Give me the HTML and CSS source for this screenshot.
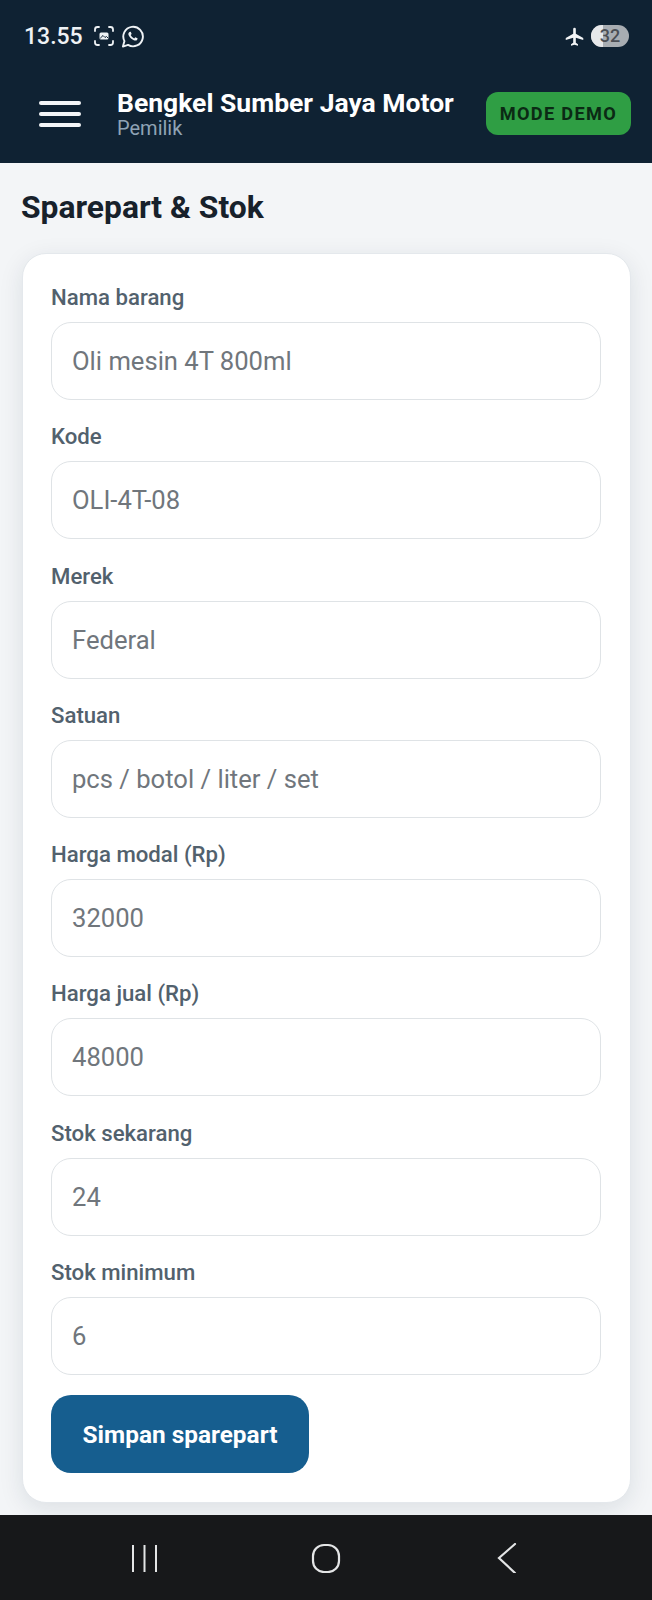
FILE: index.html
```html
<!DOCTYPE html>
<html lang="id">
<head>
  <meta charset="UTF-8">
  <title>Sparepart &amp; Stok</title>
  <meta name="viewport" content="width=device-width, initial-scale=1.0">
  <link rel="stylesheet" href="styles.css">
</head>
<body>
  <div class="top-area">
    <!-- Android status bar -->
    <div class="status-bar">
      <div class="status-left">
        <span class="status-time">13.55</span>
        <svg class="status-icon" width="24" height="24" viewBox="0 0 24 24" fill="none" stroke="#eef2f5" stroke-width="1.800" stroke-linecap="round">
          <path d="M3 7V5.500Q3 3 5.500 3H7M17 3H18.500Q21 3 21 5.500V7M21 17V18.500Q21 21 18.500 21H17M7 21H5.500Q3 21 3 18.500V17"/>
          <rect x="7.500" y="8.500" width="9" height="7" rx="1.500" fill="#eef2f5" stroke="none"/>
          <path d="M8.500 14L11 11.500L13 13.500L14.500 12.500L16 14" stroke="#0f2233" stroke-width="1"/>
        </svg>
        <svg class="status-icon whatsapp-icon" width="23" height="23" viewBox="0 0 24 24" fill="none" stroke="#eef2f5" stroke-width="2" stroke-linejoin="round">
          <path d="M2 22.500L3.600 16.800A10.200 10.200 0 1 1 7.400 20.800Z"/>
          <path d="M8.800 7.200C7.800 8 7.300 9.200 8 10.800C9 13 11 15 13.400 16C15 16.600 16.400 16.200 17 15C17.300 14.400 17.300 14 17.200 13.800L14.900 12.700L13.800 14C12.200 13.400 10.800 12 10.100 10.500L11.100 9.300L10.200 7.100Z" fill="#eef2f5" stroke="none"/>
        </svg>
      </div>
      <div class="status-right">
        <svg width="21" height="21" viewBox="0 0 24 24" fill="#f2f4f6">
          <path d="M22 16v-2.200l-8.500-5V3.500a1.500 1.500 0 0 0-3 0v5.300l-8.500 5V16l8.500-2.500V19l-2.500 1.800V22.500l4-1.100 4 1.100v-1.700L13.500 19v-5.500z"/>
        </svg>
        <div class="battery"><span class="battery-fill"></span><span class="battery-level">32</span></div>
      </div>
    </div>

    <!-- App header -->
    <header class="app-header">
      <button class="menu-btn" aria-label="Menu"><span></span><span></span><span></span></button>
      <div class="app-title">
        <div class="app-name">Bengkel Sumber Jaya Motor</div>
        <div class="app-role">Pemilik</div>
      </div>
      <span class="demo-badge">MODE DEMO</span>
    </header>
  </div>

  <main class="content">
    <h1 class="page-title">Sparepart &amp; Stok</h1>
    <form class="card">
      <div class="field">
        <label class="field-label" for="nama">Nama barang</label>
        <input class="field-input" id="nama" placeholder="Oli mesin 4T 800ml">
      </div>
      <div class="field">
        <label class="field-label" for="kode">Kode</label>
        <input class="field-input" id="kode" placeholder="OLI-4T-08">
      </div>
      <div class="field">
        <label class="field-label" for="merek">Merek</label>
        <input class="field-input" id="merek" placeholder="Federal">
      </div>
      <div class="field">
        <label class="field-label" for="satuan">Satuan</label>
        <input class="field-input" id="satuan" placeholder="pcs / botol / liter / set">
      </div>
      <div class="field">
        <label class="field-label" for="modal">Harga modal (Rp)</label>
        <input class="field-input" id="modal" placeholder="32000">
      </div>
      <div class="field">
        <label class="field-label" for="jual">Harga jual (Rp)</label>
        <input class="field-input" id="jual" placeholder="48000">
      </div>
      <div class="field">
        <label class="field-label" for="stok">Stok sekarang</label>
        <input class="field-input" id="stok" placeholder="24">
      </div>
      <div class="field">
        <label class="field-label" for="minimum">Stok minimum</label>
        <input class="field-input" id="minimum" placeholder="6">
      </div>
      <button class="save-btn" type="button">Simpan sparepart</button>
    </form>
  </main>

  <!-- Android navigation bar -->
  <nav class="nav-bar">
    <svg width="30" height="30" viewBox="0 0 30 30" fill="none" stroke="#e4e5e6" stroke-width="2">
      <path d="M3 2V29M14.500 2V29M26 2V29"/>
    </svg>
    <svg width="30" height="30" viewBox="0 0 30 30" fill="none" stroke="#e4e5e6" stroke-width="2.200">
      <rect x="2" y="2" width="26" height="27" rx="11"/>
    </svg>
    <svg width="30" height="30" viewBox="0 0 30 30" fill="none" stroke="#e4e5e6" stroke-width="2.200" stroke-linecap="round">
      <path d="M23 1L7 15L23 30"/>
    </svg>
  </nav>
</body>
</html>
```

FILE: styles.css
```css
html, body {
  margin: 0;
  height: 100%;
}
body {
  display: flex;
  flex-direction: column;
  height: 1600px;
  overflow: hidden;
  background: #f3f5f7;
  font-family: Roboto, "Liberation Sans", sans-serif;
}
.top-area {
  background: #0f2233;
  height: 163px;
  box-sizing: border-box;
}
.status-bar {
  display: flex;
  justify-content: space-between;
  align-items: center;
  height: 72px;
  padding: 0 23px 0 24px;
  color: #eef2f5;
}
.status-left {
  display: flex;
  align-items: center;
}
.status-time {
  font-size: 23px;
  font-weight: 500;
  margin-right: 9px;
}
.status-icon {
  display: block;
}
.whatsapp-icon {
  margin-left: 5px;
}
.status-right {
  display: flex;
  align-items: center;
  gap: 6px;
}
.battery {
  position: relative;
  width: 38px;
  height: 22px;
  border-radius: 11px;
  background: #a8adb2;
  overflow: hidden;
}
.battery-fill {
  position: absolute;
  left: 0;
  top: 0;
  bottom: 0;
  width: 12px;
  background: #e6e8ea;
}
.battery-level {
  position: absolute;
  left: 0;
  right: 0;
  top: 0;
  text-align: center;
  font-size: 18px;
  line-height: 22px;
  font-weight: 500;
  color: #4b4f55;
}
.app-header {
  display: flex;
  align-items: center;
  height: 83px;
  padding: 0 21px 0 39px;
}
.menu-btn {
  display: flex;
  flex-direction: column;
  gap: 7px;
  width: 42px;
  padding: 0;
  margin-right: 36px;
  border: none;
  background: transparent;
}
.menu-btn span {
  display: block;
  height: 4px;
  border-radius: 2px;
  background: #f4f6f8;
}
.app-title {
  flex: 1;
  padding-bottom: 1px;
}
.app-name {
  font-size: 26.500px;
  font-weight: 700;
  line-height: 30px;
  color: #fff;
}
.app-role {
  font-size: 20px;
  line-height: 21px;
  color: #8fa3b5;
}
.demo-badge {
  display: block;
  padding: 0 14px;
  height: 43px;
  line-height: 43px;
  border-radius: 12px;
  background: #2f9e44;
  color: #0b2a14;
  font-size: 18.200px;
  font-weight: 700;
  letter-spacing: 1.300px;
}
.content {
  flex: 1;
  padding: 0 21px 0 22px;
}
.page-title {
  margin: 26px 0 27px -1px;
  font-size: 31.800px;
  line-height: 37px;
  font-weight: 700;
  color: #17212b;
}
.card {
  box-sizing: border-box;
  height: 1250px;
  padding: 30px 29px 0 28px;
  background: #fff;
  border: 1px solid #e4e8ec;
  border-radius: 24px;
  box-shadow: 0 6px 24px rgba(20, 40, 60, 0.10);
}
.field {
  margin-bottom: 23.300px;
}
.field:nth-last-child(2) {
  margin-bottom: 20px;
}
.field-label {
  display: block;
  font-size: 22.200px;
  font-weight: 500;
  line-height: 26px;
  margin-bottom: 12px;
  color: #52616d;
}
.field-input {
  display: block;
  box-sizing: border-box;
  width: 100%;
  height: 78px;
  padding: 0 20px;
  border: 1px solid #dfe3e6;
  border-radius: 20px;
  background: #fff;
  font-family: inherit;
  font-size: 25.600px;
  outline: none;
}
.field-input::placeholder {
  color: #70767c;
  opacity: 1;
}
.save-btn {
  display: block;
  height: 78px;
  width: 258px;
  border: none;
  border-radius: 20px;
  background: #165e8f;
  color: #fff;
  font-family: inherit;
  font-size: 24.400px;
  font-weight: 700;
}
.nav-bar {
  display: flex;
  justify-content: center;
  align-items: center;
  gap: 151px;
  flex: none;
  height: 85px;
  background: #17181a;
}
```
